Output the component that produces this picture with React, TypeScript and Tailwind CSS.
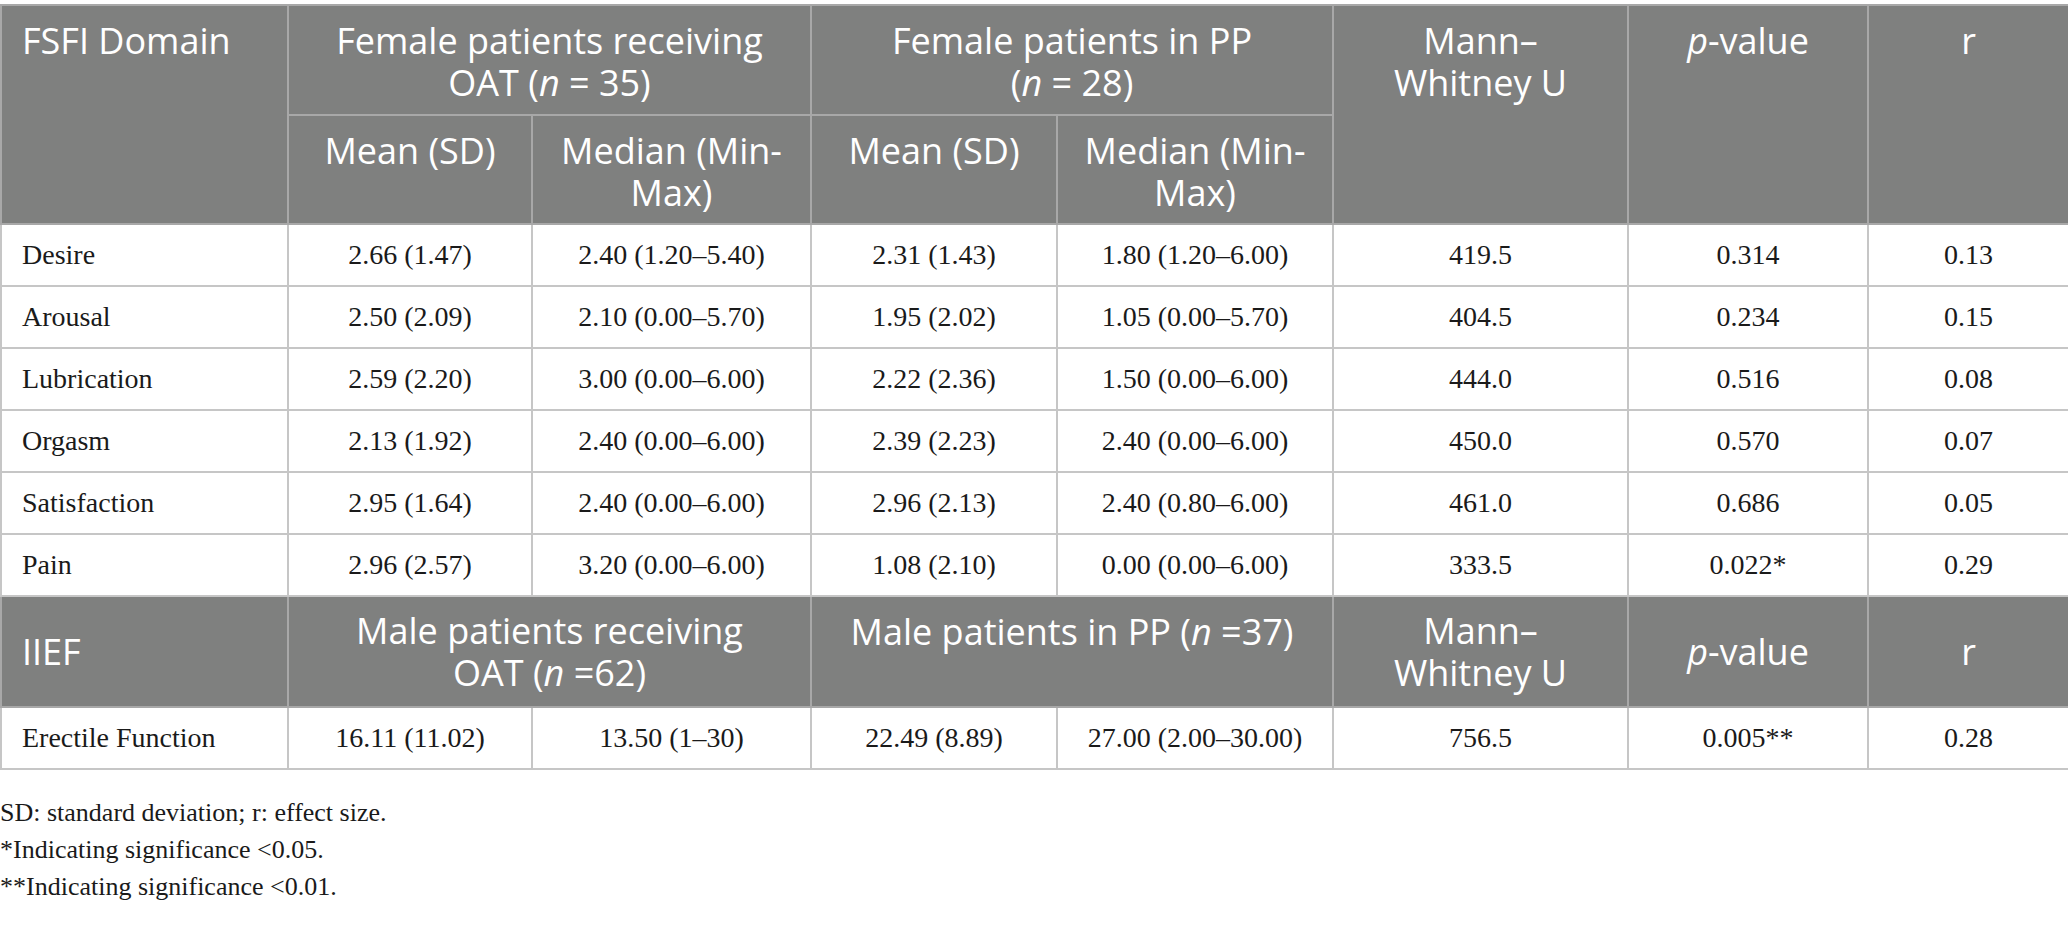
import React from 'react';

type Row = { label: string; cells: string[] };

const femaleRows: Row[] = [
  { label: 'Desire', cells: ['2.66 (1.47)', '2.40 (1.20–5.40)', '2.31 (1.43)', '1.80 (1.20–6.00)', '419.5', '0.314', '0.13'] },
  { label: 'Arousal', cells: ['2.50 (2.09)', '2.10 (0.00–5.70)', '1.95 (2.02)', '1.05 (0.00–5.70)', '404.5', '0.234', '0.15'] },
  { label: 'Lubrication', cells: ['2.59 (2.20)', '3.00 (0.00–6.00)', '2.22 (2.36)', '1.50 (0.00–6.00)', '444.0', '0.516', '0.08'] },
  { label: 'Orgasm', cells: ['2.13 (1.92)', '2.40 (0.00–6.00)', '2.39 (2.23)', '2.40 (0.00–6.00)', '450.0', '0.570', '0.07'] },
  { label: 'Satisfaction', cells: ['2.95 (1.64)', '2.40 (0.00–6.00)', '2.96 (2.13)', '2.40 (0.80–6.00)', '461.0', '0.686', '0.05'] },
  { label: 'Pain', cells: ['2.96 (2.57)', '3.20 (0.00–6.00)', '1.08 (2.10)', '0.00 (0.00–6.00)', '333.5', '0.022*', '0.29'] },
];

const maleRow: Row = {
  label: 'Erectile Function',
  cells: ['16.11 (11.02)', '13.50 (1–30)', '22.49 (8.89)', '27.00 (2.00–30.00)', '756.5', '0.005**', '0.28'],
};

const th = 'bg-[#7f807f] text-white font-normal border-2 border-[#a8a8a8] text-[36px] leading-[42px] align-top';
const td = 'border-2 border-[#c6c6c6] h-[62px] text-center text-[28px] text-[#1a1a1a]';

const DataRow: React.FC<{ row: Row }> = ({ row }) => (
  <tr>
    <td className={`${td} text-left pl-[20px]`}>{row.label}</td>
    {row.cells.map((c, i) => (
      <td key={i} className={td}>{c}</td>
    ))}
  </tr>
);

export default function App() {
  return (
    <div className="w-[2068px] min-h-[945px] bg-white pt-[4px]" style={{ fontFamily: '"Liberation Serif", serif' }}>
      <table className="w-[2068px] table-fixed border-collapse">
        <colgroup>
          <col className="w-[287px]" />
          <col className="w-[244px]" />
          <col className="w-[279px]" />
          <col className="w-[246px]" />
          <col className="w-[276px]" />
          <col className="w-[295px]" />
          <col className="w-[240px]" />
          <col className="w-[201px]" />
        </colgroup>
        <thead className="font-['Open_Sans',sans-serif]">
          <tr className="h-[110px]">
            <th rowSpan={2} className={`${th} text-left pl-[20px] pt-[14px]`}>FSFI Domain</th>
            <th colSpan={2} className={`${th} pt-[14px]`}>
              Female patients receiving
              <br />
              OAT (<i>n</i> = 35)
            </th>
            <th colSpan={2} className={`${th} pt-[14px]`}>
              Female patients in PP
              <br />
              (<i>n</i> = 28)
            </th>
            <th rowSpan={2} className={`${th} pt-[14px]`}>
              Mann–
              <br />
              Whitney U
            </th>
            <th rowSpan={2} className={`${th} pt-[14px]`}>
              <i>p</i>-value
            </th>
            <th rowSpan={2} className={`${th} pt-[14px]`}>r</th>
          </tr>
          <tr className="h-[109px]">
            <th className={`${th} pt-[14px]`}>Mean (SD)</th>
            <th className={`${th} pt-[14px]`}>
              Median (Min-
              <br />
              Max)
            </th>
            <th className={`${th} pt-[14px]`}>Mean (SD)</th>
            <th className={`${th} pt-[14px]`}>
              Median (Min-
              <br />
              Max)
            </th>
          </tr>
        </thead>
        <tbody>
          {femaleRows.map((r) => (
            <DataRow key={r.label} row={r} />
          ))}
          <tr className="h-[111px] font-['Open_Sans',sans-serif]">
            <th className={`${th} !align-middle text-left pl-[20px]`}>IIEF</th>
            <th colSpan={2} className={`${th} !align-middle`}>
              Male patients receiving
              <br />
              OAT (<i>n</i> =62)
            </th>
            <th colSpan={2} className={`${th} pt-[14px]`}>
              Male patients in PP (<i>n</i> =37)
            </th>
            <th className={`${th} !align-middle`}>
              Mann–
              <br />
              Whitney U
            </th>
            <th className={`${th} !align-middle`}>
              <i>p</i>-value
            </th>
            <th className={`${th} !align-middle`}>r</th>
          </tr>
          <DataRow row={maleRow} />
        </tbody>
      </table>
      <div className="mt-[24px] text-[26px] leading-[37px] text-[#1a1a1a]">
        <p>SD: standard deviation; r: effect size.</p>
        <p>*Indicating significance &lt;0.05.</p>
        <p>**Indicating significance &lt;0.01.</p>
      </div>
    </div>
  );
}
